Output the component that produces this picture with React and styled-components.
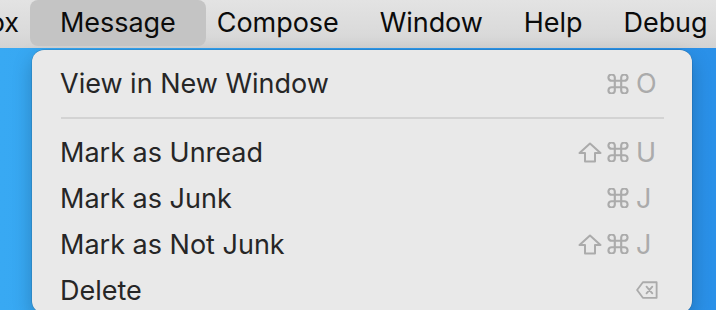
import React from "react";
import styled, { createGlobalStyle } from "styled-components";

const GlobalStyle = createGlobalStyle`
  html, body {
    margin: 0;
    padding: 0;
  }
  body {
    background: linear-gradient(90deg, #38a9f3 0%, #2f9cef 45%, #2a90e8 100%);
    font-family: Inter, "Noto Sans", "Liberation Sans", sans-serif;
    -webkit-font-smoothing: antialiased;
  }
`;

const Screen = styled.div`
  width: 716px;
  height: 310px;
  overflow: hidden;
`;

const MenuBar = styled.div`
  display: flex;
  align-items: flex-start;
  height: 48px;
  background: linear-gradient(180deg, #e3e3e3 0%, #dadada 70%, #d3d3d3 100%);
  white-space: nowrap;
`;

// first title runs off the left edge of the screen
const Lead = styled.div`
  display: flex;
  justify-content: flex-end;
  flex: 0 0 39.5px;
  width: 39.5px;
`;

const MenuTitle = styled.div`
  flex-shrink: 0;
  height: 46px;
  line-height: 45px;
  padding: 0 30px;
  margin: 0 -9.5px;
  border-radius: 8px;
  font-size: 27px;
  letter-spacing: -0.05px;
  color: #0b0b0b;
  background: ${(p) => (p.$active ? "#c4c4c4" : "transparent")};
`;

const Panel = styled.div`
  margin: 2px 0 0 32px;
  width: 660px;
  padding-top: 10.5px;
  background: #e9e9e9;
  border-radius: 12px;
  box-shadow: 0 0 0 0.5px rgba(0, 0, 0, 0.18), 0 8px 20px rgba(0, 0, 0, 0.22);
`;

const Row = styled.div`
  display: grid;
  grid-template-columns: 1fr auto 21px;
  align-items: center;
  height: 46px;
  padding: 0 34px 0 28px;
`;

const Label = styled.span`
  font-size: 27px;
  color: #262626;
  white-space: nowrap;
`;

const Mods = styled.span`
  display: flex;
  align-items: center;
  justify-content: flex-end;
  gap: 5px;
  padding-right: 8px;
  color: #ababab;
`;

const Key = styled.span`
  display: flex;
  align-items: center;
  font-size: 27px;
  color: #ababab;
  margin-left: -1px;
`;

const Separator = styled.div`
  height: 2px;
  margin: 10px 28px 10.5px 29px;
  background: #d3d3d3;
`;

const Glyph = styled.svg`
  display: block;
  fill: none;
  stroke: currentColor;
  stroke-width: 2;
  stroke-linejoin: round;
  stroke-linecap: round;
`;

const Cmd = () => (
  <Glyph width="22" height="20" viewBox="2.6 2.6 18.8 18.8">
    <path d="M15 6v12a3 3 0 1 0 3-3H6a3 3 0 1 0 3 3V6a3 3 0 1 0-3 3h12a3 3 0 1 0-3-3z" strokeWidth="2" />
  </Glyph>
);

const Shift = () => (
  <Glyph width="24" height="21" viewBox="0 0 24 21">
    <path d="M12 1.5 L1.5 11 H7 V19.5 H17 V11 H22.5 Z" />
  </Glyph>
);

const Backspace = () => (
  <Glyph width="24" height="20" viewBox="0 0 24 20">
    <path d="M7.5 1.5 H22.5 V18.5 H7.5 L1.2 10 Z" />
    <path d="M11.5 6.3 L17.8 13.7 M17.8 6.3 L11.5 13.7" />
  </Glyph>
);

const titles = ["Message", "Compose", "Window", "Help", "Debug"];

const items = [
  { label: "View in New Window", mods: ["cmd"], key: "O" },
  { separator: true },
  { label: "Mark as Unread", mods: ["shift", "cmd"], key: "U" },
  { label: "Mark as Junk", mods: ["cmd"], key: "J" },
  { label: "Mark as Not Junk", mods: ["shift", "cmd"], key: "J" },
  { label: "Delete", mods: [], key: "backspace" },
];

export default function App() {
  return (
    <Screen>
      <GlobalStyle />
      <MenuBar>
        <Lead>
          <MenuTitle>Mailbox</MenuTitle>
        </Lead>
        {titles.map((t) => (
          <MenuTitle key={t} $active={t === "Message"}>
            {t}
          </MenuTitle>
        ))}
      </MenuBar>
      <Panel>
        {items.map((it, i) =>
          it.separator ? (
            <Separator key={i} />
          ) : (
            <Row key={i}>
              <Label>{it.label}</Label>
              <Mods>
                {it.mods.map((m) => (m === "cmd" ? <Cmd key={m} /> : <Shift key={m} />))}
              </Mods>
              <Key>{it.key === "backspace" ? <Backspace /> : it.key}</Key>
            </Row>
          )
        )}
      </Panel>
    </Screen>
  );
}
